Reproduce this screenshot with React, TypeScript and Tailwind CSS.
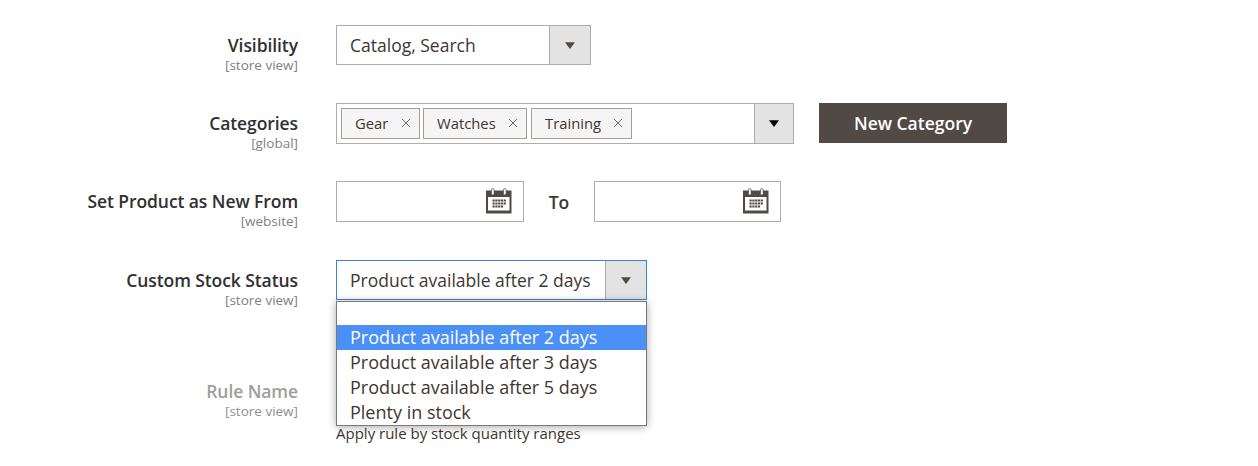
import React from "react";

function Label({ title, scope, muted }: { title: string; scope: string; muted?: boolean }) {
  return (
    <div className="w-[298px] shrink-0 text-right pt-[8px]">
      <div className={`text-[17.5px] tracking-[-0.08px] leading-[24px] font-semibold ${muted ? "text-[#a09d9a]" : "text-[#303030]"}`}>{title}</div>
      <div className={`text-[13.5px] leading-[16px] ${muted ? "text-[#8f8f8f]" : "text-[#808080]"}`}>{scope}</div>
    </div>
  );
}

function Arrow({ color = "#514943" }: { color?: string }) {
  return (
    <svg width="10" height="7" viewBox="0 0 10 7">
      <path d="M0 0.3H10L5 7Z" fill={color} />
    </svg>
  );
}

function SelectBox({ text, width, focused }: { text: string; width: string; focused?: boolean }) {
  return (
    <div className={`${width} h-[40px] flex bg-white border ${focused ? "border-[#3b83d9]" : "border-[#adadad]"}`}>
      <div className="flex-1 pl-[13px] text-[17.5px] leading-[38px] text-[#41362f] whitespace-nowrap overflow-hidden">{text}</div>
      <div className="w-[41px] shrink-0 flex items-center justify-center bg-[#e3e3e3] border-l border-[#adadad]">
        <Arrow />
      </div>
    </div>
  );
}

function Chip({ text, width }: { text: string; width: string }) {
  return (
    <div className={`${width} h-[31px] flex items-center justify-between pl-[13px] pr-[8px] bg-[#f5f5f5] border border-[#a79d95] text-[14.8px] text-[#41362f]`}>
      <span>{text}</span>
      <svg width="10" height="10" viewBox="0 0 10 10" className="mb-[2px]">
        <path d="M1 1L9 9M9 1L1 9" stroke="#6e6e6e" strokeWidth="1" />
      </svg>
    </div>
  );
}

function CalendarIcon() {
  const cells = [];
  for (let r = 0; r < 3; r++) {
    for (let c = 0; c < 5; c++) {
      if (r === 2 && c === 4) continue;
      cells.push(<rect key={`${r}-${c}`} x={6.5 + c * 2.8} y={11.5 + r * 3} width="2.2" height="2" fill="#514943" />);
    }
  }
  return (
    <svg width="26" height="26" viewBox="0 0 26 26" className="mb-[2px]">
      <rect x="0" y="2.5" width="25.5" height="23" fill="#514943" />
      <rect x="2" y="9" width="21.5" height="13.5" fill="#ffffff" />
      <rect x="5.5" y="0.5" width="2.6" height="6.5" rx="1.3" fill="#ffffff" stroke="#514943" strokeWidth="0.7" />
      <rect x="17.5" y="0.5" width="2.6" height="6.5" rx="1.3" fill="#ffffff" stroke="#514943" strokeWidth="0.7" />
      {cells}
    </svg>
  );
}

function DateBox({ width }: { width: string }) {
  return (
    <div className={`${width} h-[41px] flex items-center justify-end pr-[11px] bg-white border border-[#adadad]`}>
      <CalendarIcon />
    </div>
  );
}

export default function App() {
  return (
    <div className="w-[1258px] h-[466px] overflow-hidden bg-white pt-[25px] font-['Open_Sans',sans-serif]">
      {/* Visibility */}
      <div className="flex gap-[38px]">
        <Label title="Visibility" scope="[store view]" />
        <SelectBox text="Catalog, Search" width="w-[255px]" />
      </div>

      {/* Categories */}
      <div className="flex gap-[38px] mt-[30px]">
        <Label title="Categories" scope="[global]" />
        <div className="flex items-start">
          <div className="w-[458px] h-[41px] flex bg-white border border-[#adadad]">
            <div className="flex-1 flex gap-[3px] pl-[4px] pt-[4px]">
              <Chip text="Gear" width="w-[79px]" />
              <Chip text="Watches" width="w-[104px]" />
              <div className="ml-[1px]">
                <Chip text="Training" width="w-[101px]" />
              </div>
            </div>
            <div className="w-[39px] shrink-0 flex items-center justify-center bg-[#e3e3e3] border-l border-[#adadad]">
              <Arrow color="#000000" />
            </div>
          </div>
          <button className="ml-[25px] w-[188px] h-[40px] bg-[#514943] text-white text-[17.5px] font-semibold">New Category</button>
        </div>
      </div>

      {/* New from / to */}
      <div className="flex gap-[38px] mt-[30px]">
        <Label title="Set Product as New From" scope="[website]" />
        <div className="flex items-start">
          <DateBox width="w-[188px]" />
          <div className="w-[70px] text-center text-[17.5px] leading-[43px] font-semibold text-[#41362f]">To</div>
          <DateBox width="w-[187px]" />
        </div>
      </div>

      {/* Custom stock status */}
      <div className="flex gap-[38px] mt-[31px]">
        <Label title="Custom Stock Status" scope="[store view]" />
        <div className="relative">
          <SelectBox text="Product available after 2 days" width="w-[311px]" focused />
          <div className="absolute z-10 left-0 top-[41px] w-[311px] h-[125px] bg-white border border-[#7a7a7a] shadow-[0_1px_8px_rgba(0,0,0,0.35)] text-[18px] leading-[25px] text-[#41362f]">
            <div className="h-[23px]" />
            <div className="pl-[13px] bg-[#4a90f7] text-white">Product available after 2 days</div>
            <div className="pl-[13px]">Product available after 3 days</div>
            <div className="pl-[13px]">Product available after 5 days</div>
            <div className="pl-[13px]">Plenty in stock</div>
          </div>
        </div>
      </div>

      {/* Rule name, mostly under the open list */}
      <div className="flex gap-[38px] mt-[63px]">
        <Label title="Rule Name" scope="[store view]" muted />
        <div className="pt-[53px] text-[15px] leading-[18px] text-[#41362f]">Apply rule by stock quantity ranges</div>
      </div>
    </div>
  );
}
